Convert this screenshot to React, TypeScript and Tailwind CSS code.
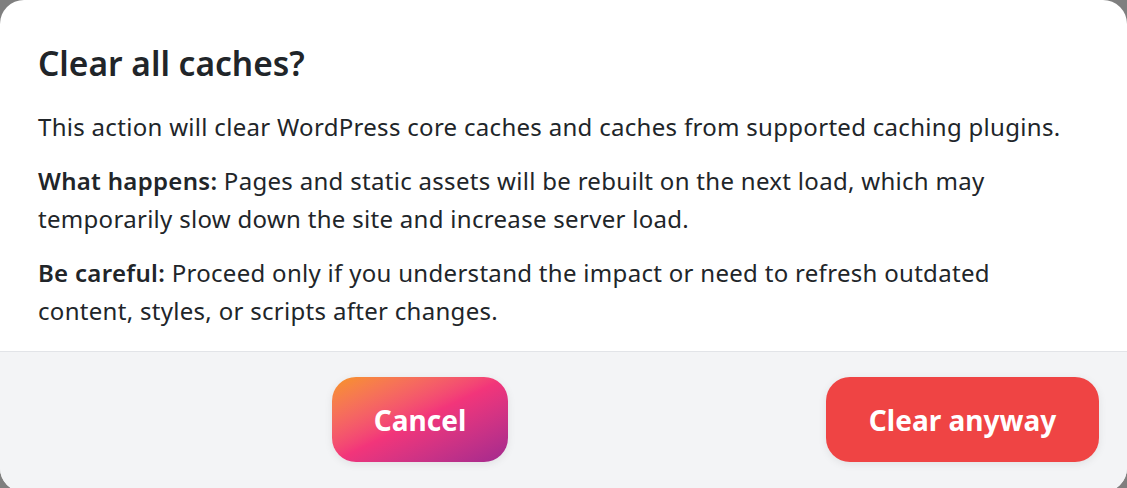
import React from "react";

export default function App() {
  return (
    <div className="h-[488px] w-[1127px] overflow-hidden bg-[#7f7f7f]" style={{ fontFamily: '"Noto Sans", "Open Sans", sans-serif' }}>
      <div className="flex h-[492px] w-[1127px] flex-col overflow-hidden rounded-[24px] bg-white">
        <div className="flex h-[351px] flex-col px-[38px] pt-[43px]">
          <h2 className="text-[33.5px] font-semibold leading-[40px] text-[#212529]">Clear all caches?</h2>
          <div className="mt-[25px] flex flex-col gap-[16px] text-[24px] leading-[38px] tracking-[0.3px] text-[#212529]">
            <p>This action will clear WordPress core caches and caches from supported caching plugins.</p>
            <p>
              <span className="font-semibold">What happens:</span> Pages and static assets will be rebuilt on the next load, which may temporarily slow down the site and increase server load.
            </p>
            <p>
              <span className="font-semibold">Be careful:</span> Proceed only if you understand the impact or need to refresh outdated content, styles, or scripts after changes.
            </p>
          </div>
        </div>
        <div className="flex flex-1 items-start justify-end gap-[318px] border-t border-[#e2e4e8] bg-[#f3f4f6] pr-[28px] pt-[25px]">
          <button className="h-[85px] w-[176px] rounded-[24px] bg-gradient-to-br from-[#f7941d] via-[#f2357a] to-[#a3298e] text-[28px] font-bold text-white shadow-[0_2px_8px_rgba(0,0,0,0.08)]">
            Cancel
          </button>
          <button className="h-[85px] w-[273px] rounded-[24px] bg-[#ef4444] text-[28px] font-bold text-white shadow-[0_2px_8px_rgba(0,0,0,0.08)]">
            Clear anyway
          </button>
        </div>
      </div>
    </div>
  );
}
